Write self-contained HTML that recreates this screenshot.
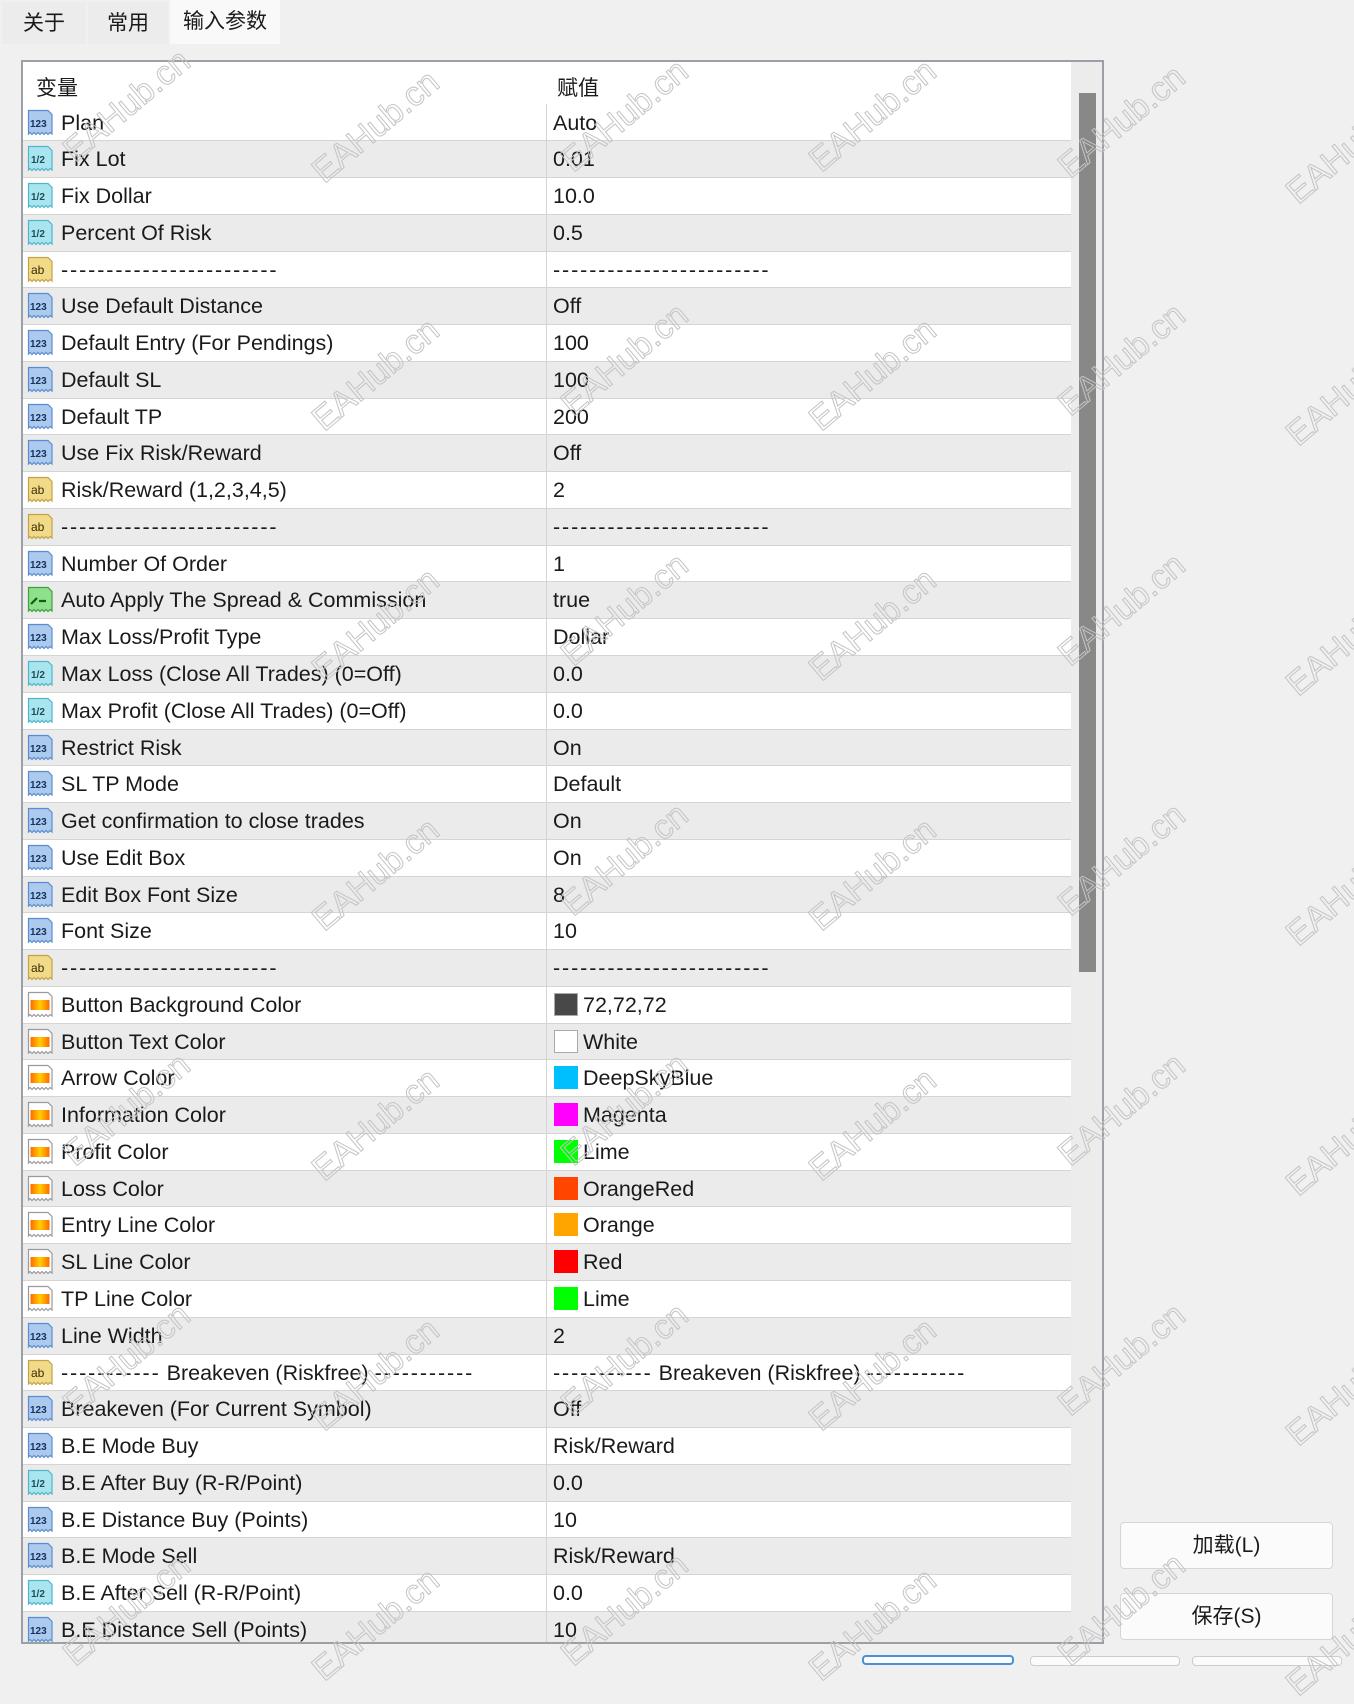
<!DOCTYPE html>
<html><head><meta charset="utf-8">
<style>
*{margin:0;padding:0;box-sizing:border-box}
body{width:1354px;height:1660px;background:#f0f0f0;position:relative;overflow:hidden;font-family:"Liberation Sans","Noto Sans CJK SC",sans-serif;color:#1a1a1a;font-size:21.5px}
.tab{position:absolute;top:2px;height:42px;line-height:44px;font-size:21px;text-align:center;background:#ececec}
.tab.act{background:#f9f9f9;top:0;height:44px}
.frame{position:absolute;left:21px;top:60px;width:1083px;height:1584px;border:2px solid #9aa0a6;background:#fff;overflow:hidden}
.hdr{position:absolute;left:0;top:0;width:1050px;height:43px;background:#fff;font-size:21px}
.hdr span{position:absolute;top:10px}
.rows{position:absolute;left:0;top:42.5px;width:1048px}
.r{position:relative;height:36.77px;border-bottom:1.5px solid #d4d4d4;white-space:nowrap}
.r:nth-child(odd){background:#fff}
.r:nth-child(even){background:#ebebeb}
.r .l{position:absolute;left:38px;top:6px}
.r .v{position:absolute;left:530px;top:6px}
.r .v.s{left:560px}
.r:before{content:"";position:absolute;left:523px;top:-1px;bottom:-1px;border-left:1.5px solid #d4d4d4}
.sw{position:absolute;left:531px;top:6px;width:24px;height:23px;border:1px solid #aaa}
.ic{position:absolute;left:4px;top:4px;width:27px;height:28px}
.ic path.d{stroke-width:1.2}
.ic text{font-family:"Liberation Sans",sans-serif;font-weight:bold;font-size:10px}
.b path.d{fill:#acc9ee;stroke:#5a8dcf}.b text{fill:#16325e}
.h path.d{fill:#a9e5ef;stroke:#4fb6c9}.h text{fill:#1d4e5a}
.a path.d{fill:#f1da88;stroke:#c4a24a}.a text{fill:#3a2c00;font-size:12px;font-weight:normal}
.g path.d{fill:#8fe08b;stroke:#3f9f3f}
.c path.d{fill:#fff;stroke:#9a9a9a}
.dash{letter-spacing:1.9px}
.sb{position:absolute;left:1048px;top:0;width:31px;height:1584px;background:#ececec}
.th{position:absolute;left:8px;top:31px;width:17px;height:879px;background:#888}
.btn{position:absolute;left:1120px;width:213px;height:47px;background:#fbfbfb;border:1px solid #d6d6d6;border-radius:4px;text-align:center;line-height:45px;font-size:21px}
.wm{position:absolute;font-size:34px;color:transparent;-webkit-text-stroke:1px #c4c4c4;transform:translate(-50%,-50%) rotate(-40deg);white-space:nowrap;font-family:"Liberation Sans",sans-serif;pointer-events:none}
</style></head><body>
<div class="tab" style="left:2px;width:84px">关于</div>
<div class="tab" style="left:88px;width:80px">常用</div>
<div class="tab act" style="left:170px;width:110px">输入参数</div>

<div class="frame">
<div class="hdr"><span style="left:13px">变量</span><span style="left:534px">赋值</span></div>
<div class="rows">
<div class="r"><svg class="ic b" viewBox="0 0 27 28"><path class="d" d="M1.5 1.5H21L25 5.5V25L23 23.5 21 25.5 19 23.5 17 25.5 15 23.5 13 25.5 11 23.5 9 25.5 7 23.5 5 25.5 3 23.5 1.5 25Z"/><text x="3" y="18">123</text></svg><span class="l">Plan</span><span class="v">Auto</span></div>
<div class="r"><svg class="ic h" viewBox="0 0 27 28"><path class="d" d="M1.5 1.5H21L25 5.5V25L23 23.5 21 25.5 19 23.5 17 25.5 15 23.5 13 25.5 11 23.5 9 25.5 7 23.5 5 25.5 3 23.5 1.5 25Z"/><text x="4" y="18">1/2</text></svg><span class="l">Fix Lot</span><span class="v">0.01</span></div>
<div class="r"><svg class="ic h" viewBox="0 0 27 28"><path class="d" d="M1.5 1.5H21L25 5.5V25L23 23.5 21 25.5 19 23.5 17 25.5 15 23.5 13 25.5 11 23.5 9 25.5 7 23.5 5 25.5 3 23.5 1.5 25Z"/><text x="4" y="18">1/2</text></svg><span class="l">Fix Dollar</span><span class="v">10.0</span></div>
<div class="r"><svg class="ic h" viewBox="0 0 27 28"><path class="d" d="M1.5 1.5H21L25 5.5V25L23 23.5 21 25.5 19 23.5 17 25.5 15 23.5 13 25.5 11 23.5 9 25.5 7 23.5 5 25.5 3 23.5 1.5 25Z"/><text x="4" y="18">1/2</text></svg><span class="l">Percent Of Risk</span><span class="v">0.5</span></div>
<div class="r"><svg class="ic a" viewBox="0 0 27 28"><path class="d" d="M1.5 1.5H21L25 5.5V25L23 23.5 21 25.5 19 23.5 17 25.5 15 23.5 13 25.5 11 23.5 9 25.5 7 23.5 5 25.5 3 23.5 1.5 25Z"/><text x="4" y="18">ab</text></svg><span class="l dash">------------------------</span><span class="v dash">------------------------</span></div>
<div class="r"><svg class="ic b" viewBox="0 0 27 28"><path class="d" d="M1.5 1.5H21L25 5.5V25L23 23.5 21 25.5 19 23.5 17 25.5 15 23.5 13 25.5 11 23.5 9 25.5 7 23.5 5 25.5 3 23.5 1.5 25Z"/><text x="3" y="18">123</text></svg><span class="l">Use Default Distance</span><span class="v">Off</span></div>
<div class="r"><svg class="ic b" viewBox="0 0 27 28"><path class="d" d="M1.5 1.5H21L25 5.5V25L23 23.5 21 25.5 19 23.5 17 25.5 15 23.5 13 25.5 11 23.5 9 25.5 7 23.5 5 25.5 3 23.5 1.5 25Z"/><text x="3" y="18">123</text></svg><span class="l">Default Entry (For Pendings)</span><span class="v">100</span></div>
<div class="r"><svg class="ic b" viewBox="0 0 27 28"><path class="d" d="M1.5 1.5H21L25 5.5V25L23 23.5 21 25.5 19 23.5 17 25.5 15 23.5 13 25.5 11 23.5 9 25.5 7 23.5 5 25.5 3 23.5 1.5 25Z"/><text x="3" y="18">123</text></svg><span class="l">Default SL</span><span class="v">100</span></div>
<div class="r"><svg class="ic b" viewBox="0 0 27 28"><path class="d" d="M1.5 1.5H21L25 5.5V25L23 23.5 21 25.5 19 23.5 17 25.5 15 23.5 13 25.5 11 23.5 9 25.5 7 23.5 5 25.5 3 23.5 1.5 25Z"/><text x="3" y="18">123</text></svg><span class="l">Default TP</span><span class="v">200</span></div>
<div class="r"><svg class="ic b" viewBox="0 0 27 28"><path class="d" d="M1.5 1.5H21L25 5.5V25L23 23.5 21 25.5 19 23.5 17 25.5 15 23.5 13 25.5 11 23.5 9 25.5 7 23.5 5 25.5 3 23.5 1.5 25Z"/><text x="3" y="18">123</text></svg><span class="l">Use Fix Risk/Reward</span><span class="v">Off</span></div>
<div class="r"><svg class="ic a" viewBox="0 0 27 28"><path class="d" d="M1.5 1.5H21L25 5.5V25L23 23.5 21 25.5 19 23.5 17 25.5 15 23.5 13 25.5 11 23.5 9 25.5 7 23.5 5 25.5 3 23.5 1.5 25Z"/><text x="4" y="18">ab</text></svg><span class="l">Risk/Reward (1,2,3,4,5)</span><span class="v">2</span></div>
<div class="r"><svg class="ic a" viewBox="0 0 27 28"><path class="d" d="M1.5 1.5H21L25 5.5V25L23 23.5 21 25.5 19 23.5 17 25.5 15 23.5 13 25.5 11 23.5 9 25.5 7 23.5 5 25.5 3 23.5 1.5 25Z"/><text x="4" y="18">ab</text></svg><span class="l dash">------------------------</span><span class="v dash">------------------------</span></div>
<div class="r"><svg class="ic b" viewBox="0 0 27 28"><path class="d" d="M1.5 1.5H21L25 5.5V25L23 23.5 21 25.5 19 23.5 17 25.5 15 23.5 13 25.5 11 23.5 9 25.5 7 23.5 5 25.5 3 23.5 1.5 25Z"/><text x="3" y="18">123</text></svg><span class="l">Number Of Order</span><span class="v">1</span></div>
<div class="r"><svg class="ic g" viewBox="0 0 27 28"><path class="d" d="M1.5 1.5H21L25 5.5V25L23 23.5 21 25.5 19 23.5 17 25.5 15 23.5 13 25.5 11 23.5 9 25.5 7 23.5 5 25.5 3 23.5 1.5 25Z"/><path d="M4 18L10 12M12 15H19" stroke="#135c13" stroke-width="2.2" fill="none"/></svg><span class="l">Auto Apply The Spread &amp; Commission</span><span class="v">true</span></div>
<div class="r"><svg class="ic b" viewBox="0 0 27 28"><path class="d" d="M1.5 1.5H21L25 5.5V25L23 23.5 21 25.5 19 23.5 17 25.5 15 23.5 13 25.5 11 23.5 9 25.5 7 23.5 5 25.5 3 23.5 1.5 25Z"/><text x="3" y="18">123</text></svg><span class="l">Max Loss/Profit Type</span><span class="v">Dollar</span></div>
<div class="r"><svg class="ic h" viewBox="0 0 27 28"><path class="d" d="M1.5 1.5H21L25 5.5V25L23 23.5 21 25.5 19 23.5 17 25.5 15 23.5 13 25.5 11 23.5 9 25.5 7 23.5 5 25.5 3 23.5 1.5 25Z"/><text x="4" y="18">1/2</text></svg><span class="l">Max Loss (Close All Trades) (0=Off)</span><span class="v">0.0</span></div>
<div class="r"><svg class="ic h" viewBox="0 0 27 28"><path class="d" d="M1.5 1.5H21L25 5.5V25L23 23.5 21 25.5 19 23.5 17 25.5 15 23.5 13 25.5 11 23.5 9 25.5 7 23.5 5 25.5 3 23.5 1.5 25Z"/><text x="4" y="18">1/2</text></svg><span class="l">Max Profit (Close All Trades) (0=Off)</span><span class="v">0.0</span></div>
<div class="r"><svg class="ic b" viewBox="0 0 27 28"><path class="d" d="M1.5 1.5H21L25 5.5V25L23 23.5 21 25.5 19 23.5 17 25.5 15 23.5 13 25.5 11 23.5 9 25.5 7 23.5 5 25.5 3 23.5 1.5 25Z"/><text x="3" y="18">123</text></svg><span class="l">Restrict Risk</span><span class="v">On</span></div>
<div class="r"><svg class="ic b" viewBox="0 0 27 28"><path class="d" d="M1.5 1.5H21L25 5.5V25L23 23.5 21 25.5 19 23.5 17 25.5 15 23.5 13 25.5 11 23.5 9 25.5 7 23.5 5 25.5 3 23.5 1.5 25Z"/><text x="3" y="18">123</text></svg><span class="l">SL TP Mode</span><span class="v">Default</span></div>
<div class="r"><svg class="ic b" viewBox="0 0 27 28"><path class="d" d="M1.5 1.5H21L25 5.5V25L23 23.5 21 25.5 19 23.5 17 25.5 15 23.5 13 25.5 11 23.5 9 25.5 7 23.5 5 25.5 3 23.5 1.5 25Z"/><text x="3" y="18">123</text></svg><span class="l">Get confirmation to close trades</span><span class="v">On</span></div>
<div class="r"><svg class="ic b" viewBox="0 0 27 28"><path class="d" d="M1.5 1.5H21L25 5.5V25L23 23.5 21 25.5 19 23.5 17 25.5 15 23.5 13 25.5 11 23.5 9 25.5 7 23.5 5 25.5 3 23.5 1.5 25Z"/><text x="3" y="18">123</text></svg><span class="l">Use Edit Box</span><span class="v">On</span></div>
<div class="r"><svg class="ic b" viewBox="0 0 27 28"><path class="d" d="M1.5 1.5H21L25 5.5V25L23 23.5 21 25.5 19 23.5 17 25.5 15 23.5 13 25.5 11 23.5 9 25.5 7 23.5 5 25.5 3 23.5 1.5 25Z"/><text x="3" y="18">123</text></svg><span class="l">Edit Box Font Size</span><span class="v">8</span></div>
<div class="r"><svg class="ic b" viewBox="0 0 27 28"><path class="d" d="M1.5 1.5H21L25 5.5V25L23 23.5 21 25.5 19 23.5 17 25.5 15 23.5 13 25.5 11 23.5 9 25.5 7 23.5 5 25.5 3 23.5 1.5 25Z"/><text x="3" y="18">123</text></svg><span class="l">Font Size</span><span class="v">10</span></div>
<div class="r"><svg class="ic a" viewBox="0 0 27 28"><path class="d" d="M1.5 1.5H21L25 5.5V25L23 23.5 21 25.5 19 23.5 17 25.5 15 23.5 13 25.5 11 23.5 9 25.5 7 23.5 5 25.5 3 23.5 1.5 25Z"/><text x="4" y="18">ab</text></svg><span class="l dash">------------------------</span><span class="v dash">------------------------</span></div>
<div class="r"><svg class="ic c" viewBox="0 0 27 28"><defs><linearGradient id="og" x1="0" x2="1"><stop offset="0" stop-color="#ff6a00"/><stop offset=".5" stop-color="#ffd000"/><stop offset="1" stop-color="#ff6a00"/></linearGradient></defs><path class="d" d="M1.5 1.5H21L25 5.5V25L23 23.5 21 25.5 19 23.5 17 25.5 15 23.5 13 25.5 11 23.5 9 25.5 7 23.5 5 25.5 3 23.5 1.5 25Z"/><rect x="3.5" y="9" width="19" height="10" fill="url(#og)"/></svg><span class="l">Button Background Color</span><i class="sw" style="background:#484848"></i><span class="v s">72,72,72</span></div>
<div class="r"><svg class="ic c" viewBox="0 0 27 28"><path class="d" d="M1.5 1.5H21L25 5.5V25L23 23.5 21 25.5 19 23.5 17 25.5 15 23.5 13 25.5 11 23.5 9 25.5 7 23.5 5 25.5 3 23.5 1.5 25Z"/><rect x="3.5" y="9" width="19" height="10" fill="url(#og)"/></svg><span class="l">Button Text Color</span><i class="sw" style="background:#fff"></i><span class="v s">White</span></div>
<div class="r"><svg class="ic c" viewBox="0 0 27 28"><path class="d" d="M1.5 1.5H21L25 5.5V25L23 23.5 21 25.5 19 23.5 17 25.5 15 23.5 13 25.5 11 23.5 9 25.5 7 23.5 5 25.5 3 23.5 1.5 25Z"/><rect x="3.5" y="9" width="19" height="10" fill="url(#og)"/></svg><span class="l">Arrow Color</span><i class="sw" style="background:#00bfff;border-color:#00bfff"></i><span class="v s">DeepSkyBlue</span></div>
<div class="r"><svg class="ic c" viewBox="0 0 27 28"><path class="d" d="M1.5 1.5H21L25 5.5V25L23 23.5 21 25.5 19 23.5 17 25.5 15 23.5 13 25.5 11 23.5 9 25.5 7 23.5 5 25.5 3 23.5 1.5 25Z"/><rect x="3.5" y="9" width="19" height="10" fill="url(#og)"/></svg><span class="l">Information Color</span><i class="sw" style="background:#ff00ff;border-color:#ff00ff"></i><span class="v s">Magenta</span></div>
<div class="r"><svg class="ic c" viewBox="0 0 27 28"><path class="d" d="M1.5 1.5H21L25 5.5V25L23 23.5 21 25.5 19 23.5 17 25.5 15 23.5 13 25.5 11 23.5 9 25.5 7 23.5 5 25.5 3 23.5 1.5 25Z"/><rect x="3.5" y="9" width="19" height="10" fill="url(#og)"/></svg><span class="l">Profit Color</span><i class="sw" style="background:#00ff00;border-color:#00ff00"></i><span class="v s">Lime</span></div>
<div class="r"><svg class="ic c" viewBox="0 0 27 28"><path class="d" d="M1.5 1.5H21L25 5.5V25L23 23.5 21 25.5 19 23.5 17 25.5 15 23.5 13 25.5 11 23.5 9 25.5 7 23.5 5 25.5 3 23.5 1.5 25Z"/><rect x="3.5" y="9" width="19" height="10" fill="url(#og)"/></svg><span class="l">Loss Color</span><i class="sw" style="background:#ff4500;border-color:#ff4500"></i><span class="v s">OrangeRed</span></div>
<div class="r"><svg class="ic c" viewBox="0 0 27 28"><path class="d" d="M1.5 1.5H21L25 5.5V25L23 23.5 21 25.5 19 23.5 17 25.5 15 23.5 13 25.5 11 23.5 9 25.5 7 23.5 5 25.5 3 23.5 1.5 25Z"/><rect x="3.5" y="9" width="19" height="10" fill="url(#og)"/></svg><span class="l">Entry Line Color</span><i class="sw" style="background:#ffa500;border-color:#ffa500"></i><span class="v s">Orange</span></div>
<div class="r"><svg class="ic c" viewBox="0 0 27 28"><path class="d" d="M1.5 1.5H21L25 5.5V25L23 23.5 21 25.5 19 23.5 17 25.5 15 23.5 13 25.5 11 23.5 9 25.5 7 23.5 5 25.5 3 23.5 1.5 25Z"/><rect x="3.5" y="9" width="19" height="10" fill="url(#og)"/></svg><span class="l">SL Line Color</span><i class="sw" style="background:#ff0000;border-color:#ff0000"></i><span class="v s">Red</span></div>
<div class="r"><svg class="ic c" viewBox="0 0 27 28"><path class="d" d="M1.5 1.5H21L25 5.5V25L23 23.5 21 25.5 19 23.5 17 25.5 15 23.5 13 25.5 11 23.5 9 25.5 7 23.5 5 25.5 3 23.5 1.5 25Z"/><rect x="3.5" y="9" width="19" height="10" fill="url(#og)"/></svg><span class="l">TP Line Color</span><i class="sw" style="background:#00ff00;border-color:#00ff00"></i><span class="v s">Lime</span></div>
<div class="r"><svg class="ic b" viewBox="0 0 27 28"><path class="d" d="M1.5 1.5H21L25 5.5V25L23 23.5 21 25.5 19 23.5 17 25.5 15 23.5 13 25.5 11 23.5 9 25.5 7 23.5 5 25.5 3 23.5 1.5 25Z"/><text x="3" y="18">123</text></svg><span class="l">Line Width</span><span class="v">2</span></div>
<div class="r"><svg class="ic a" viewBox="0 0 27 28"><path class="d" d="M1.5 1.5H21L25 5.5V25L23 23.5 21 25.5 19 23.5 17 25.5 15 23.5 13 25.5 11 23.5 9 25.5 7 23.5 5 25.5 3 23.5 1.5 25Z"/><text x="4" y="18">ab</text></svg><span class="l"><span class="dash">-----------</span> Breakeven (Riskfree) <span class="dash">-----------</span></span><span class="v"><span class="dash">-----------</span> Breakeven (Riskfree) <span class="dash">-----------</span></span></div>
<div class="r"><svg class="ic b" viewBox="0 0 27 28"><path class="d" d="M1.5 1.5H21L25 5.5V25L23 23.5 21 25.5 19 23.5 17 25.5 15 23.5 13 25.5 11 23.5 9 25.5 7 23.5 5 25.5 3 23.5 1.5 25Z"/><text x="3" y="18">123</text></svg><span class="l">Breakeven (For Current Symbol)</span><span class="v">Off</span></div>
<div class="r"><svg class="ic b" viewBox="0 0 27 28"><path class="d" d="M1.5 1.5H21L25 5.5V25L23 23.5 21 25.5 19 23.5 17 25.5 15 23.5 13 25.5 11 23.5 9 25.5 7 23.5 5 25.5 3 23.5 1.5 25Z"/><text x="3" y="18">123</text></svg><span class="l">B.E Mode Buy</span><span class="v">Risk/Reward</span></div>
<div class="r"><svg class="ic h" viewBox="0 0 27 28"><path class="d" d="M1.5 1.5H21L25 5.5V25L23 23.5 21 25.5 19 23.5 17 25.5 15 23.5 13 25.5 11 23.5 9 25.5 7 23.5 5 25.5 3 23.5 1.5 25Z"/><text x="4" y="18">1/2</text></svg><span class="l">B.E After Buy (R-R/Point)</span><span class="v">0.0</span></div>
<div class="r"><svg class="ic b" viewBox="0 0 27 28"><path class="d" d="M1.5 1.5H21L25 5.5V25L23 23.5 21 25.5 19 23.5 17 25.5 15 23.5 13 25.5 11 23.5 9 25.5 7 23.5 5 25.5 3 23.5 1.5 25Z"/><text x="3" y="18">123</text></svg><span class="l">B.E Distance Buy (Points)</span><span class="v">10</span></div>
<div class="r"><svg class="ic b" viewBox="0 0 27 28"><path class="d" d="M1.5 1.5H21L25 5.5V25L23 23.5 21 25.5 19 23.5 17 25.5 15 23.5 13 25.5 11 23.5 9 25.5 7 23.5 5 25.5 3 23.5 1.5 25Z"/><text x="3" y="18">123</text></svg><span class="l">B.E Mode Sell</span><span class="v">Risk/Reward</span></div>
<div class="r"><svg class="ic h" viewBox="0 0 27 28"><path class="d" d="M1.5 1.5H21L25 5.5V25L23 23.5 21 25.5 19 23.5 17 25.5 15 23.5 13 25.5 11 23.5 9 25.5 7 23.5 5 25.5 3 23.5 1.5 25Z"/><text x="4" y="18">1/2</text></svg><span class="l">B.E After Sell (R-R/Point)</span><span class="v">0.0</span></div>
<div class="r"><svg class="ic b" viewBox="0 0 27 28"><path class="d" d="M1.5 1.5H21L25 5.5V25L23 23.5 21 25.5 19 23.5 17 25.5 15 23.5 13 25.5 11 23.5 9 25.5 7 23.5 5 25.5 3 23.5 1.5 25Z"/><text x="3" y="18">123</text></svg><span class="l">B.E Distance Sell (Points)</span><span class="v">10</span></div>
</div>
<div class="sb"><div class="th"></div></div>
</div>

<div class="btn" style="top:1522px">加载(L)</div>
<div class="btn" style="top:1593px">保存(S)</div>
<div style="position:absolute;left:862px;top:1655px;width:152px;height:10px;border:2px solid #4a90d9;border-radius:4px;background:#fbfbfb"></div>
<div style="position:absolute;left:1030px;top:1656px;width:150px;height:10px;border:1px solid #ccc;border-radius:4px;background:#fbfbfb"></div>
<div style="position:absolute;left:1192px;top:1656px;width:150px;height:10px;border:1px solid #ccc;border-radius:4px;background:#fbfbfb"></div>

<span class="wm" style="left:127px;top:106px">EAHub.cn</span>
<span class="wm" style="left:376px;top:127px">EAHub.cn</span>
<span class="wm" style="left:625px;top:116px">EAHub.cn</span>
<span class="wm" style="left:873px;top:116px">EAHub.cn</span>
<span class="wm" style="left:1122px;top:122px">EAHub.cn</span>
<span class="wm" style="left:1350px;top:148px">EAHub.cn</span>
<span class="wm" style="left:376px;top:375px">EAHub.cn</span>
<span class="wm" style="left:625px;top:360px">EAHub.cn</span>
<span class="wm" style="left:873px;top:375px">EAHub.cn</span>
<span class="wm" style="left:1122px;top:360px">EAHub.cn</span>
<span class="wm" style="left:1350px;top:390px">EAHub.cn</span>
<span class="wm" style="left:376px;top:625px">EAHub.cn</span>
<span class="wm" style="left:625px;top:610px">EAHub.cn</span>
<span class="wm" style="left:873px;top:625px">EAHub.cn</span>
<span class="wm" style="left:1122px;top:610px">EAHub.cn</span>
<span class="wm" style="left:1350px;top:640px">EAHub.cn</span>
<span class="wm" style="left:376px;top:875px">EAHub.cn</span>
<span class="wm" style="left:625px;top:860px">EAHub.cn</span>
<span class="wm" style="left:873px;top:875px">EAHub.cn</span>
<span class="wm" style="left:1122px;top:860px">EAHub.cn</span>
<span class="wm" style="left:1350px;top:890px">EAHub.cn</span>
<span class="wm" style="left:127px;top:1110px">EAHub.cn</span>
<span class="wm" style="left:376px;top:1125px">EAHub.cn</span>
<span class="wm" style="left:625px;top:1110px">EAHub.cn</span>
<span class="wm" style="left:873px;top:1125px">EAHub.cn</span>
<span class="wm" style="left:1122px;top:1110px">EAHub.cn</span>
<span class="wm" style="left:1350px;top:1140px">EAHub.cn</span>
<span class="wm" style="left:127px;top:1360px">EAHub.cn</span>
<span class="wm" style="left:376px;top:1375px">EAHub.cn</span>
<span class="wm" style="left:625px;top:1360px">EAHub.cn</span>
<span class="wm" style="left:873px;top:1375px">EAHub.cn</span>
<span class="wm" style="left:1122px;top:1360px">EAHub.cn</span>
<span class="wm" style="left:1350px;top:1390px">EAHub.cn</span>
<span class="wm" style="left:127px;top:1610px">EAHub.cn</span>
<span class="wm" style="left:376px;top:1625px">EAHub.cn</span>
<span class="wm" style="left:625px;top:1610px">EAHub.cn</span>
<span class="wm" style="left:873px;top:1625px">EAHub.cn</span>
<span class="wm" style="left:1122px;top:1610px">EAHub.cn</span>
<span class="wm" style="left:1350px;top:1640px">EAHub.cn</span>
</body></html>
